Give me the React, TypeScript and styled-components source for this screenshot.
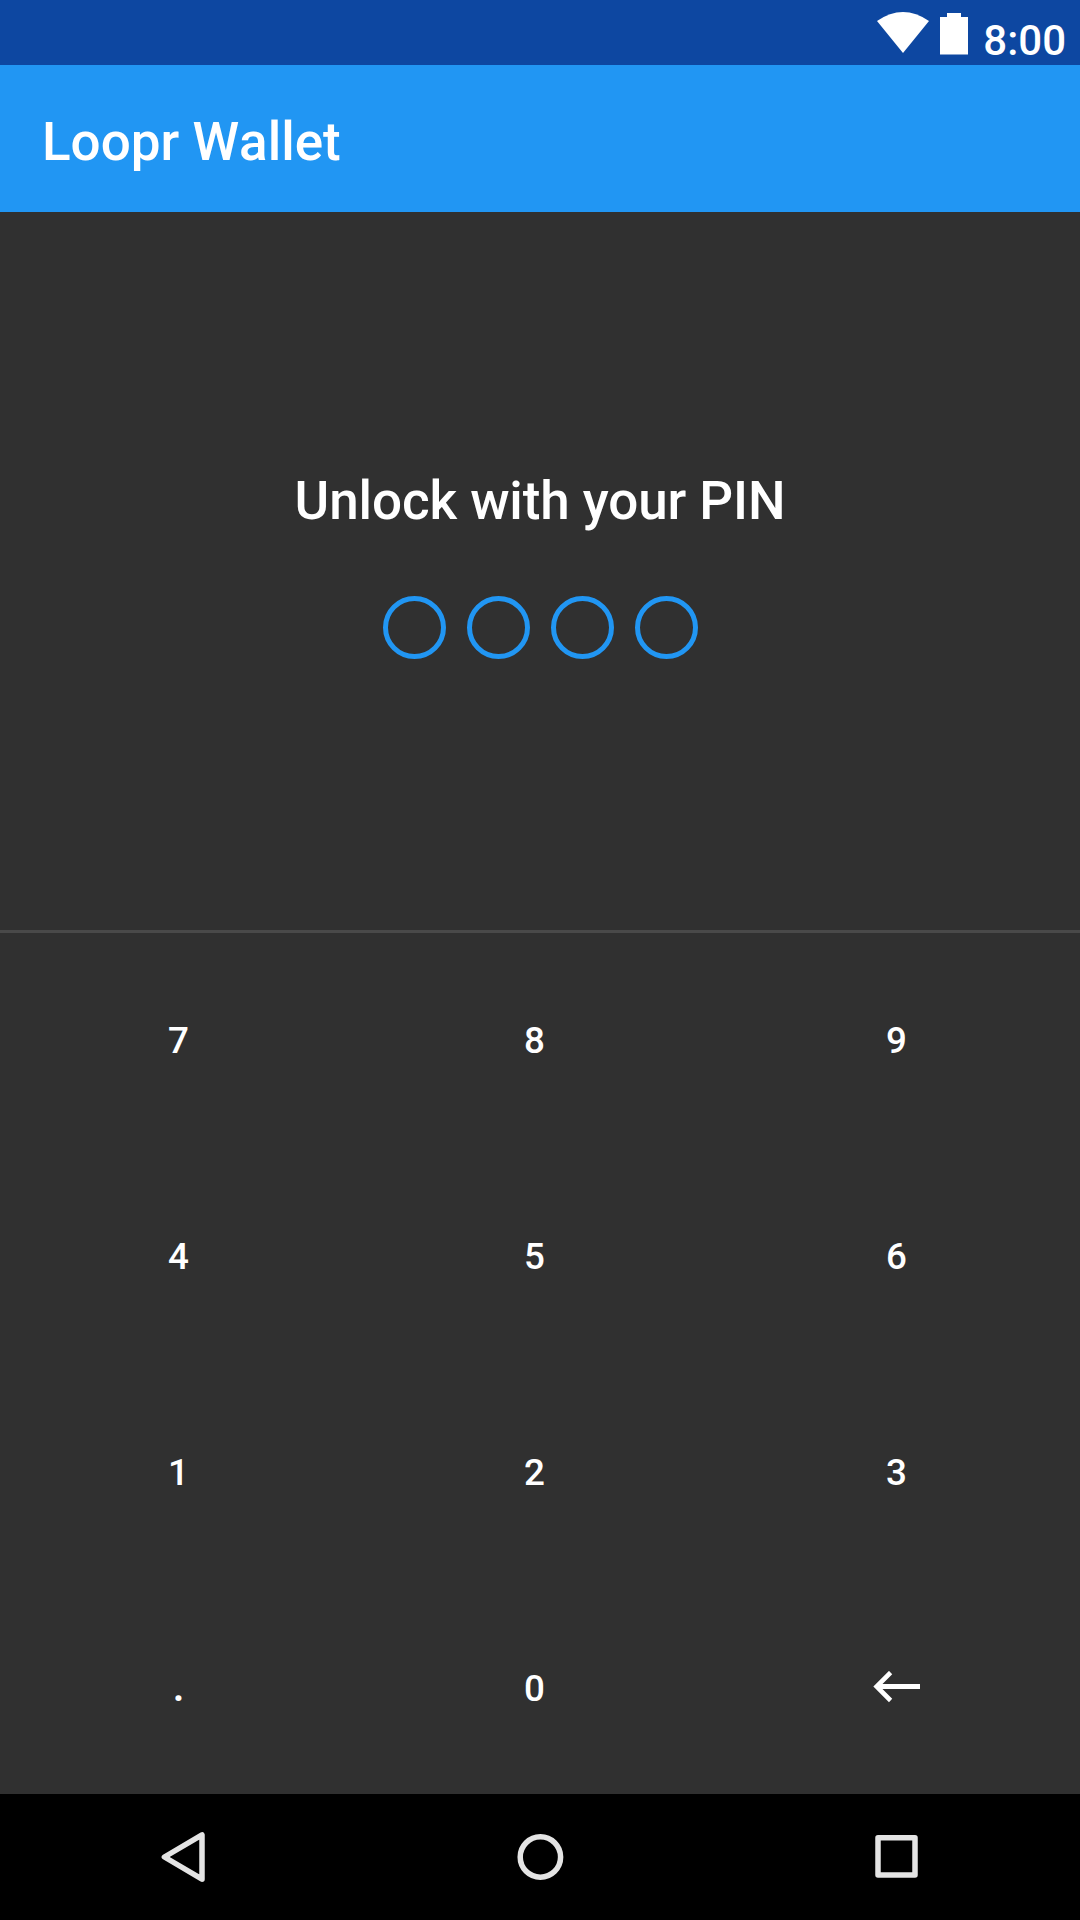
import React from "react";
import styled, { createGlobalStyle } from "styled-components";

const Global = createGlobalStyle`
  * { box-sizing: border-box; }
  body { margin: 0; background: #303030; font-family: Roboto, "Noto Sans", sans-serif; color: #fff; }
`;
const Screen = styled.div`
  width: 1080px;
  height: 1920px;
  display: flex;
  flex-direction: column;
  background: #303030;
  overflow: hidden;
`;
const StatusBar = styled.div`
  height: 65px;
  background: #0d47a1;
  display: flex;
  justify-content: flex-end;
  align-items: flex-start;
  padding: 12px 14px 0 0;
`;
const Wifi = styled.svg`
  width: 52px;
  height: 42px;
  margin-right: 11px;
`;
const Battery = styled.svg`
  width: 28px;
  height: 43px;
  margin-right: 15.3px;
`;
const Clock = styled.span`
  font-size: 42px;
  font-weight: 500;
  line-height: 49px;
  margin-top: 4px;
`;
const AppBar = styled.header`
  height: 147px;
  background: #2196f3;
  display: flex;
  align-items: center;
  padding: 7px 42px 0;
`;
const Title = styled.h1`
  margin: 0;
  font-size: 53px;
  font-weight: 500;
  line-height: 62px;
  font-kerning: none;
`;
const Prompt = styled.main`
  height: 718px;
  display: flex;
  flex-direction: column;
  align-items: center;
  padding-top: 258px;
`;
const Heading = styled.h2`
  margin: 0;
  font-size: 53px;
  font-weight: 500;
  line-height: 62px;
  letter-spacing: -0.1px;
`;
const Dots = styled.div`
  display: flex;
  gap: 21px;
  margin-top: 64px;
`;
const Dot = styled.span`
  width: 63px;
  height: 63px;
  border: 5px solid #2196f3;
  border-radius: 50%;
`;
const Divider = styled.div`
  height: 3px;
  background: #494949;
`;
const Pad = styled.section`
  height: 861px;
  display: grid;
  grid-template-columns: 356px 356px 368px;
  grid-template-rows: repeat(4, 216px);
`;
const Key = styled.button<{ $point?: boolean }>`
  border: 0;
  background: none;
  padding: 0 0 ${(p) => (p.$point ? 6 : 2)}px 1px;
  color: #fff;
  font: 500 ${(p) => (p.$point ? 44 : 36.75)}px / 43px Roboto, sans-serif;
  display: flex;
  align-items: center;
  justify-content: center;
`;
const BackArrow = styled.svg`
  width: 48px;
  height: 32px;
  margin: 0 1px 2px 0;
  fill: none;
  stroke: #fff;
`;
const NavBar = styled.nav`
  height: 126px;
  background: #000;
  display: flex;
  justify-content: space-between;
  align-items: center;
  padding: 0 155px;
`;
const NavIcon = styled.svg`
  width: 56px;
  height: 56px;
  fill: none;
  stroke: #e4e4e4;
  stroke-width: 5.5;
  stroke-linejoin: round;
`;

const keys = ["7", "8", "9", "4", "5", "6", "1", "2", "3", ".", "0"];

export default function App() {
  return (
    <Screen>
      <Global />
      <StatusBar>
        <Wifi viewBox="0 0 52 42"><path d="M0 9Q26-9 52 9L26 41Z" fill="#fff" /></Wifi>
        <Battery viewBox="0 0 28 43"><path d="M0 5h7V1h14v4h7v37.4H0z" fill="#fff" /></Battery>
        <Clock>8:00</Clock>
      </StatusBar>
      <AppBar><Title>Loopr Wallet</Title></AppBar>
      <Prompt>
        <Heading>Unlock with your PIN</Heading>
        <Dots>{[0, 1, 2, 3].map((i) => <Dot key={i} />)}</Dots>
      </Prompt>
      <Divider />
      <Pad>
        {keys.map((k) => <Key key={k} $point={k === "."}>{k}</Key>)}
        <Key aria-label="Backspace">
          <BackArrow viewBox="0 0 48 32">
            <path d="M48 15.5H6" strokeWidth="5" />
            <path d="M18.6 1.5L4.6 15.5l14 14" strokeWidth="4.6" />
          </BackArrow>
        </Key>
      </Pad>
      <NavBar>
        <NavIcon viewBox="0 0 56 56"><path d="M47 5.8v44.4L9.4 28z" /></NavIcon>
        <NavIcon viewBox="0 0 56 56"><circle cx="28.4" cy="28" r="20.2" /></NavIcon>
        <NavIcon viewBox="0 0 56 56"><rect x="9" y="8.7" width="37" height="37.3" /></NavIcon>
      </NavBar>
    </Screen>
  );
}
